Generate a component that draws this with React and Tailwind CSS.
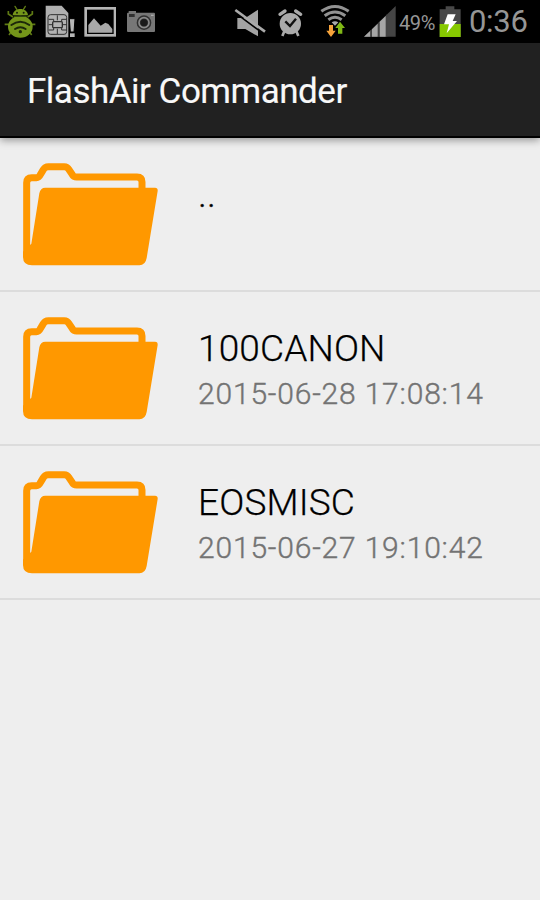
const entries = [
  { name: '..', modified: '' },
  { name: '100CANON', modified: '2015-06-28 17:08:14' },
  { name: 'EOSMISC', modified: '2015-06-27 19:10:42' },
];

const BugIcon = () => (
  <svg className="h-9 w-8 shrink-0" viewBox="12 12 96 108" fill="none">
    <path d="M45 19l6 10M76 19l-6 10" stroke="#5f7a14" strokeWidth="4" strokeLinecap="round" />
    <path d="M25 33v9l14 9M97 33v9l-14 9M14 73h16M92 73h14M27 105l8-11M95 105l-8-11" stroke="#5f7a14" strokeWidth="5" />
    <path d="M38 46c2-25 44-25 46 0z" fill="#74951a" />
    <ellipse cx="61" cy="80" rx="37" ry="33" fill="#74951a" />
    <path d="M42 49h38" stroke="#34460f" strokeWidth="4" />
    <circle cx="51" cy="38" r="3" fill="#17200a" />
    <circle cx="71" cy="38" r="3" fill="#17200a" />
    <path d="M34 75q27-20 54 0M45 87q16-11 32 0" stroke="#1c270a" strokeWidth="6" strokeLinecap="round" />
    <circle cx="61" cy="95" r="5" fill="#1c270a" />
  </svg>
);

const SimIcon = () => (
  <svg className="h-9 w-8 shrink-0" viewBox="132 12 96 108" fill="none">
    <path d="M137 17h48l20 22v73h-68z" fill="#b0b0b0" />
    <rect x="144" y="44" width="56" height="59" rx="8" fill="#b2b2b2" stroke="#303030" strokeWidth="3" />
    <path d="M146 58h15v7M146 90h15v-7M200 58h-15v7M200 90h-15v-7M146 74h12M188 74h12M172 46v15M172 102V86" stroke="#303030" strokeWidth="3" />
    <rect x="158" y="65" width="29" height="18" rx="3" stroke="#303030" strokeWidth="4" />
    <path d="M208 56h17l-3 40h-11z" fill="#b7b7b7" stroke="#000" strokeWidth="3" />
    <path d="M210 100h14v11h-14z" fill="#b7b7b7" />
  </svg>
);

const PictureIcon = () => (
  <svg className="h-9 w-8 shrink-0" viewBox="12 12 96 108" fill="none">
    <rect x="17" y="25" width="88" height="81" stroke="#b5b5b5" strokeWidth="8" />
    <path d="M25 98V75l17-20 20 22 14-9 9 4 12 15v11z" fill="#a8a8a8" />
  </svg>
);

const CameraIcon = () => (
  <svg className="h-9 w-[30px] shrink-0" viewBox="138 12 90 108" fill="none">
    <path d="M146 40V33h22v7z" fill="#777" />
    <rect x="141" y="38" width="84" height="58" rx="3" fill="#777" />
    <rect x="147" y="42" width="17" height="9" fill="#303030" />
    <circle cx="192" cy="68" r="22" fill="#303030" />
    <circle cx="192" cy="68" r="15" stroke="#8a8a8a" strokeWidth="5" />
    <circle cx="192" cy="68" r="10" fill="#1a1a1a" />
    <path d="M213 46h8" stroke="#aaa" strokeWidth="4" />
  </svg>
);

const MuteIcon = () => (
  <svg className="h-9 w-[34px] shrink-0" viewBox="24 12 102 108" fill="none">
    <path d="M37 54h24l38-25v80L61 87H37z" fill="#a3a3a3" />
    <path d="M30 38l88 65" stroke="#000" strokeWidth="5" />
    <path d="M31 30l89 65" stroke="#aaa" strokeWidth="8" />
  </svg>
);

const AlarmIcon = () => (
  <svg className="h-9 w-[30px] shrink-0" viewBox="153 12 90 108" fill="none">
    <path d="M165 43l15-10M227 43l-15-10" stroke="#aaa" strokeWidth="10" strokeLinecap="round" />
    <circle cx="196" cy="71" r="32" fill="#aaa" />
    <path d="M178 94l-6 14M214 94l6 14" stroke="#aaa" strokeWidth="8" />
    <path d="M181 64l14 14 18-22" stroke="#111" strokeWidth="7" />
  </svg>
);

const WifiIcon = () => (
  <svg className="h-9 w-[30px] shrink-0" viewBox="29 12 90 108" fill="none">
    <path d="M33 34q41-29 82 0M43 47q31-22 62 0M54 59q20-14 40 0" stroke="#929292" strokeWidth="9" />
    <path d="M64 67q10-7 20 0L74 77z" fill="#aaa" />
    <path d="M56 75h12v17h8l-14 19-14-19h8z" fill="#f7a33b" />
    <path d="M83 101h13V84h8L89 65 75 84h8z" fill="#80b816" />
  </svg>
);

const SignalIcon = () => (
  <svg className="h-9 w-8 shrink-0" viewBox="161 12 96 108" fill="none">
    <path d="M161 110L256 18v92z" fill="#454545" />
    <path d="M161 110l19-18v18zM185 88l17-17v39h-17zM208 65l18-17v62h-18z" fill="#a6a6a6" />
    <path d="M182 90v20M205 68v42M229 44v66" stroke="#444" strokeWidth="4" />
  </svg>
);

const BatteryIcon = () => (
  <svg className="h-9 w-[22px] shrink-0" viewBox="148 12 66 108" fill="none">
    <path d="M150 28h18v-9h26v9h19v83h-63z" fill="#484848" />
    <path d="M150 72h63v39h-63z" fill="#87c900" />
    <path d="M174 43h24l-9 20h13l-31 37 7-27h-15z" fill="#fff" />
  </svg>
);

const FolderIcon = () => (
  <svg className="h-[104px] w-[136px] shrink-0" viewBox="39 39 408 312" fill="none">
    <path
      d="M50 322V98q0-15 15-15h14q8 0 12-9l9-15q5-9 15-9h48q9 0 14 9l10 15q4 7 13 7h181q15 0 15 15v27"
      stroke="#ff9800"
      strokeWidth="21"
    />
    <path
      d="M39 305l25-24 24-151q3-17 18-17h329q9 0 8 10l-33 201q-4 22-22 22H66q-27 0-27-25z"
      fill="#ff9800"
    />
  </svg>
);

const StatusBar = () => (
  <div className="flex h-[43px] items-start bg-black pt-1">
    <div className="flex pl-1">
      <BugIcon />
      <div className="ml-2 flex"><SimIcon /></div>
      <div className="ml-2 flex"><PictureIcon /></div>
      <div className="ml-2.5 flex"><CameraIcon /></div>
    </div>
    <div className="ml-[77px] flex">
      <MuteIcon />
      <div className="ml-[9px] flex"><AlarmIcon /></div>
      <div className="ml-[14px] flex"><WifiIcon /></div>
      <div className="ml-[14px] flex"><SignalIcon /></div>
    </div>
    <span className="ml-[3px] mt-[5px] w-10 text-[20px] leading-7 tracking-[-0.4px] text-[#969696]">49%</span>
    <BatteryIcon />
    <span className="ml-2 text-[31px] leading-9 tracking-[-0.3px] text-[#969696]">0:36</span>
  </div>
);

const App = () => {
  return (
    <div className="h-[900px] w-[540px] overflow-hidden bg-[#eeeeee] font-[Roboto,sans-serif]">
      <StatusBar />
      <header className="relative flex h-[95px] items-center border-b-2 border-black bg-[#212121] pl-[27px] shadow-[0_2px_8px_rgba(0,0,0,0.4)]">
        <h1 className="mt-1.5 whitespace-nowrap text-[35px] tracking-[-0.5px] text-[#f8f8f8] [-webkit-text-stroke:0.15px_#f8f8f8]">
          FlashAir Commander
        </h1>
      </header>
      <ul>
        {entries.map((entry) => (
          <li key={entry.name} className="flex h-[154px] border-b-2 border-[#dcdcdc] pl-[23px] pt-[25px]">
            <FolderIcon />
            <div className="ml-[39px] pt-2.5">
              <p className="whitespace-nowrap text-[37px] font-light leading-[44px] tracking-[0.15px] text-black [-webkit-text-stroke:0.25px_#000]">
                {entry.name}
              </p>
              <p className="whitespace-nowrap text-[30px] font-light leading-[46px] tracking-[0.82px] text-[#737373] [-webkit-text-stroke:0.4px_#737373]">
                {entry.modified}
              </p>
            </div>
          </li>
        ))}
      </ul>
    </div>
  );
};

export default App;
